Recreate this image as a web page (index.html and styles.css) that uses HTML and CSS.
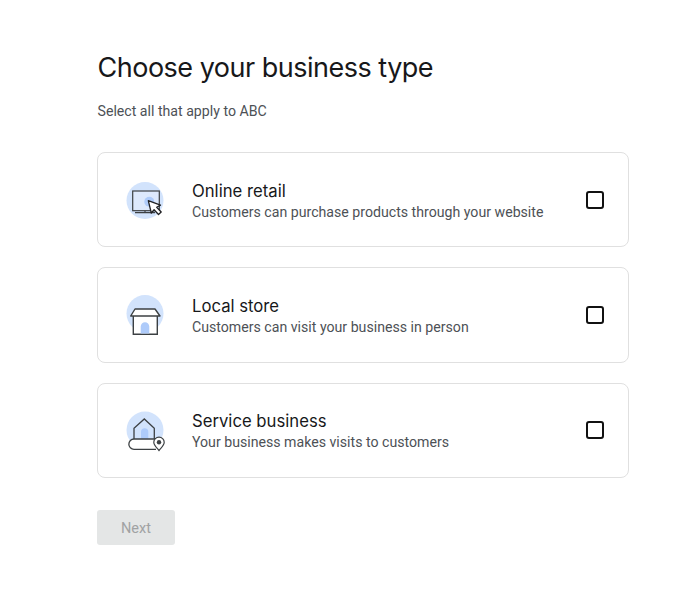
FILE: index.html
```html
<!DOCTYPE html>
<html lang="en">
<head>
<meta charset="utf-8">
<title>Choose your business type</title>
<link rel="stylesheet" href="styles.css">
</head>
<body>
<main class="page">
  <h1 class="title">Choose your business type</h1>
  <p class="subtitle">Select all that apply to ABC</p>
  <div class="list">
    <div class="card">
      <svg class="icon" viewBox="0 0 44 44">
        <circle cx="20" cy="22.500" r="18.500" fill="#d2e3fc"/>
        <rect x="7.700" y="13" width="26.600" height="19.700" fill="#e8f0fe" fill-opacity=".5" stroke="#3c4043" stroke-width="1.200"/>
        <path d="M10 34.700H30M20 32.700v2" stroke="#3c4043" stroke-width="1.200" fill="none"/>
        <circle cx="24.300" cy="23.700" r="5" fill="#aecbfa"/>
        <path d="M23.300 22.700l3 12.300 2.800-3.200 4.400 4.700 2.700-2.500-4.500-4.700 3.800-2.200z" fill="#fff" stroke="#202124" stroke-width="1.300" stroke-linejoin="round"/>
      </svg>
      <div class="copy">
        <div class="name">Online retail</div>
        <div class="desc">Customers can purchase products through your website</div>
      </div>
      <span class="check"></span>
    </div>
    <div class="card">
      <svg class="icon" viewBox="0 0 44 44">
        <circle cx="20" cy="20.500" r="18.500" fill="#d2e3fc"/>
        <path d="M8.300 23V41.300H32.300V23" fill="#fff" stroke="#3c4043" stroke-width="1.400"/>
        <path d="M10 16H30L35 23H5.700z" fill="#fff" stroke="#3c4043" stroke-width="1.400" stroke-linejoin="round"/>
        <path d="M15.700 40.600V33.500a4.300 4.300 0 0 1 8.600 0V40.600z" fill="#aecbfa"/>
      </svg>
      <div class="copy">
        <div class="name">Local store</div>
        <div class="desc">Customers can visit your business in person</div>
      </div>
      <span class="check"></span>
    </div>
    <div class="card">
      <svg class="icon" viewBox="0 0 44 44">
        <circle cx="20" cy="22" r="18.500" fill="#d2e3fc"/>
        <path d="M9 31V20.300L19.300 11l10 9.300V31" fill="none" stroke="#3c4043" stroke-width="1.300"/>
        <path d="M16 30.500V24a3.650 3.650 0 0 1 7.300 0V30.500z" fill="#aecbfa"/>
        <path d="M31 31H9a5.150 5.150 0 0 0 0 10.300H31" fill="#fff" stroke="#3c4043" stroke-width="1.300"/>
        <path d="M34 42.500c-2.500-3-5.200-5.200-5.200-8.200a5.200 5.200 0 0 1 10.400 0c0 3-2.700 5.200-5.200 8.200z" fill="#fff" stroke="#3c4043" stroke-width="1.200"/>
        <circle cx="34" cy="34.300" r="2.200" fill="#3c4043"/>
      </svg>
      <div class="copy">
        <div class="name">Service business</div>
        <div class="desc">Your business makes visits to customers</div>
      </div>
      <span class="check"></span>
    </div>
  </div>
  <button class="next" type="button" disabled>Next</button>
</main>
</body>
</html>
```
FILE: styles.css
```css
* { box-sizing: border-box; }
html, body { margin: 0; background: #fff; }
body { width: 688px; height: 592px; overflow: hidden; font-family: Roboto, "Liberation Sans", sans-serif; }
.page { padding: 50px 59px 0 97px; display: flex; flex-direction: column; align-items: flex-start; }
.title { margin: 0 0 0 .5px; font-family: Inter, Roboto, sans-serif; font-weight: 400; font-size: 27px; letter-spacing: -.5px; line-height: 36px; color: #17181a; }
.subtitle { margin: 15px 0 0 .5px; font-size: 14.150px; line-height: 20px; color: #4d5156; }
.list { margin-top: 31px; width: 532px; display: flex; flex-direction: column; gap: 20.100px; }
.card { height: 95.300px; border: 1px solid #e0e0e0; border-radius: 8px; display: flex; align-items: center; padding: 0 24px 0 26.500px; }
.icon { flex: none; width: 44px; height: 44px; }
.copy { flex: 1; margin-left: 23.500px; padding-top: 2px; }
.name { font-family: Inter, Roboto, sans-serif; font-size: 16.700px; line-height: 22px; color: #17181a; }
.desc { font-size: 14.150px; line-height: 20px; color: #4d5156; }
.check { flex: none; width: 18px; height: 18px; border: 2px solid #111; border-radius: 3px; }
.next { margin-top: 32px; width: 78px; height: 35px; padding: 1px 0 0; border: 0; border-radius: 3px; background: #e4e6e6; color: #a0a2a3; font-family: Roboto, sans-serif; font-size: 14.500px; font-weight: 400; }
```
